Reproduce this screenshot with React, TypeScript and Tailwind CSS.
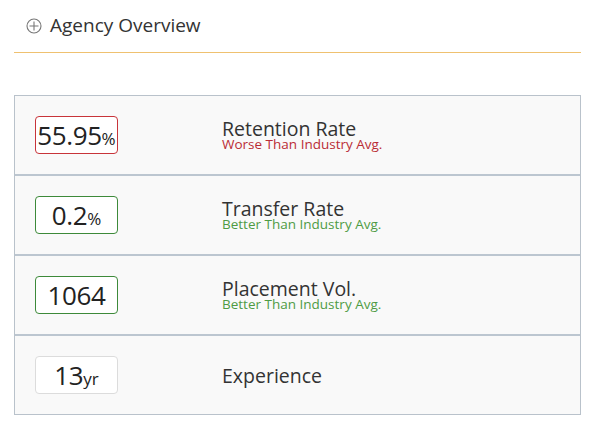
const rows = [
  { value: "55.95", unit: "%", label: "Retention Rate", note: "Worse Than Industry Avg.", tone: "bad" },
  { value: "0.2", unit: "%", label: "Transfer Rate", note: "Better Than Industry Avg.", tone: "good" },
  { value: "1064", unit: "", label: "Placement Vol.", note: "Better Than Industry Avg.", tone: "good" },
  { value: "13", unit: "yr", label: "Experience", note: "", tone: "none" },
];

export default function App() {
  return (
    <div className="w-[595px] h-[428px] bg-white text-[#333] font-['Open_Sans','Noto_Sans',sans-serif]">
      {/* Header */}
      <div className="mx-[14px]">
        <div className="flex items-center h-[52px] pb-[1px] pl-[12px]">
          <svg width="16" height="16" viewBox="0 0 16 16" fill="none" stroke="#777" strokeWidth="1.1">
            <circle cx="8" cy="8" r="7" />
            <path d="M8 3.5v9M3.5 8h9" />
          </svg>
          <span className="ml-[8px] text-[19px] leading-none text-[#333]">Agency Overview</span>
        </div>
        <div className="h-px bg-[#efc170]" />
      </div>

      {/* Panel */}
      <div className="mx-[14px] mt-[42px] border border-[#b9c2cb] bg-[#f9f9f9]">
        {rows.map((r, i) => (
          <div
            key={r.label}
            className={`flex items-center ${i < rows.length - 1 ? "h-[80px] border-b-2 border-[#bcc6d0]" : "h-[78px]"}`}
          >
            <div
              className={`ml-[20px] w-[83px] h-[38px] flex items-center justify-center rounded-[4px] bg-white border ${
                r.tone === "bad" ? "border-[#c8343a]" : r.tone === "good" ? "border-[#3d8a3a]" : "border-[#dcdcdc]"
              }`}
            >
              <span className="text-[26px] leading-none tracking-[-0.4px] text-[#222]">{r.value}</span>
              {r.unit && <span className="text-[17px] leading-none mt-[6px] text-[#222]">{r.unit}</span>}
            </div>
            <div className="ml-[104px] flex flex-col">
              <span className="text-[19.5px] leading-[19px] text-[#333]">{r.label}</span>
              {r.note && (
                <span
                  className={`text-[13.5px] leading-[13px] ${r.tone === "bad" ? "text-[#b92c35]" : "text-[#4e9b44]"}`}
                >
                  {r.note}
                </span>
              )}
            </div>
          </div>
        ))}
      </div>
    </div>
  );
}
